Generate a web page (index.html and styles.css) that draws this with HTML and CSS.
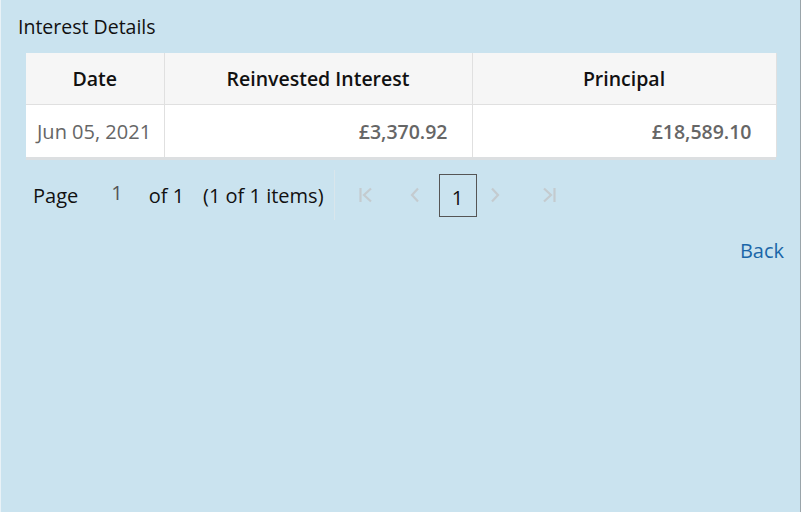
FILE: index.html
```html
<!DOCTYPE html>
<html>
<head>
<meta charset="utf-8">
<link rel="stylesheet" href="styles.css">
</head>
<body>
<div class="frame">
  <h1 class="title">Interest Details</h1>
  <div class="grid">
    <table>
      <colgroup>
        <col class="c1"><col class="c2"><col class="c3">
      </colgroup>
      <thead>
        <tr><th>Date</th><th>Reinvested Interest</th><th>Principal</th></tr>
      </thead>
      <tbody>
        <tr><td class="date">Jun 05, 2021</td><td class="num">£3,370.92</td><td class="num">£18,589.10</td></tr>
      </tbody>
    </table>
  </div>
  <div class="pager">
    <div class="info">
      <span>Page</span>
      <span class="pinput">1</span>
      <span>of 1</span>
      <span class="items">(1 of 1 items)</span>
    </div>
    <div class="nav">
      <span class="btn first">
        <svg width="16" height="16" viewBox="0 0 16 16"><path d="M2.5 1v14M13 1.5L6 8l7 6.5" fill="none" stroke="#c4cbcf" stroke-width="2.2"/></svg>
      </span>
      <span class="btn prev">
        <svg width="16" height="16" viewBox="0 0 16 16"><path d="M11 1.5L5 8l6 6.5" fill="none" stroke="#c4cbcf" stroke-width="2.2"/></svg>
      </span>
      <span class="cur">1</span>
      <span class="btn next">
        <svg width="16" height="16" viewBox="0 0 16 16"><path d="M5 1.5L11 8l-6 6.5" fill="none" stroke="#c4cbcf" stroke-width="2.2"/></svg>
      </span>
      <span class="btn last">
        <svg width="16" height="16" viewBox="0 0 16 16"><path d="M13.5 1v14M3 1.5L10 8l-7 6.5" fill="none" stroke="#c4cbcf" stroke-width="2.2"/></svg>
      </span>
    </div>
  </div>
  <div class="actions"><a class="back" href="#">Back</a></div>
</div>
</body>
</html>
```
FILE: styles.css
```css
html, body {
  margin: 0;
  padding: 0;
}
body {
  width: 801px;
  height: 512px;
  overflow: hidden;
  font-family: "Open Sans", "Noto Sans", sans-serif;
}
.frame {
  box-sizing: border-box;
  width: 801px;
  height: 512px;
  background: #cae3ef;
  border-left: 1px solid #e9f2f7;
  border-right: 1px solid #9aa4aa;
  padding: 13px 16px 0 17px;
}
.title {
  margin: 0;
  font-size: 19.5px;
  font-weight: 400;
  line-height: 28px;
  color: #111;
}
.grid {
  margin: 12px 8px 0 8px;
  width: 750px;
  background: #fff;
  border-bottom: 3px solid #dcdfe1;
}
table {
  width: 750px;
  border-collapse: collapse;
  table-layout: fixed;
}
col.c1 { width: 138px; }
col.c2 { width: 308px; }
col.c3 { width: 304px; }
th {
  height: 51px;
  padding: 0;
  background: #f6f6f6;
  font-size: 19.5px;
  font-weight: 600;
  color: #111;
  text-align: center;
  border: 1px solid #e0e0e0;
  border-top: none;
}
th:first-child, td:first-child { border-left: none; }
th:last-child, td:last-child { border-right: 1px solid #e0e0e0; }
td {
  height: 52px;
  padding: 0 24px 0 11px;
  font-size: 19.5px;
  color: #666;
  border-left: 1px solid #e0e0e0;
  white-space: nowrap;
}
td.date { padding-right: 0; font-size: 20px; }
td.num {
  text-align: right;
  font-weight: 600;
}
.pager {
  display: flex;
  align-items: center;
  margin: 10px 0 0 15px;
  height: 50px;
}
.info {
  display: flex;
  align-items: center;
  font-size: 20px;
  color: #111;
  padding-right: 10px;
  height: 50px;
  border-right: 1px solid #d9e6ec;
}
.info span { white-space: nowrap; }
.pinput {
  color: #555;
  margin: -6px 26px 0 33px;
}
.items { margin-left: 19px; }
.nav {
  display: flex;
  align-items: center;
}
.btn {
  width: 26px;
  height: 26px;
  display: flex;
  align-items: center;
  justify-content: center;
}
.first { margin-left: 18px; }
.prev { margin-left: 23px; margin-right: 11px; }
.next { margin-left: 5px; }
.last { margin-left: 28px; }
.cur {
  box-sizing: border-box;
  width: 38px;
  height: 43px;
  border: 1px solid #555;
  display: flex;
  align-items: center;
  justify-content: center;
  font-size: 20px;
  color: #111;
  padding-top: 4px;
}
.actions {
  display: flex;
  justify-content: flex-end;
  margin-top: 17px;
}
.back {
  font-size: 20px;
  color: #1a66a8;
  text-decoration: none;
}
```
